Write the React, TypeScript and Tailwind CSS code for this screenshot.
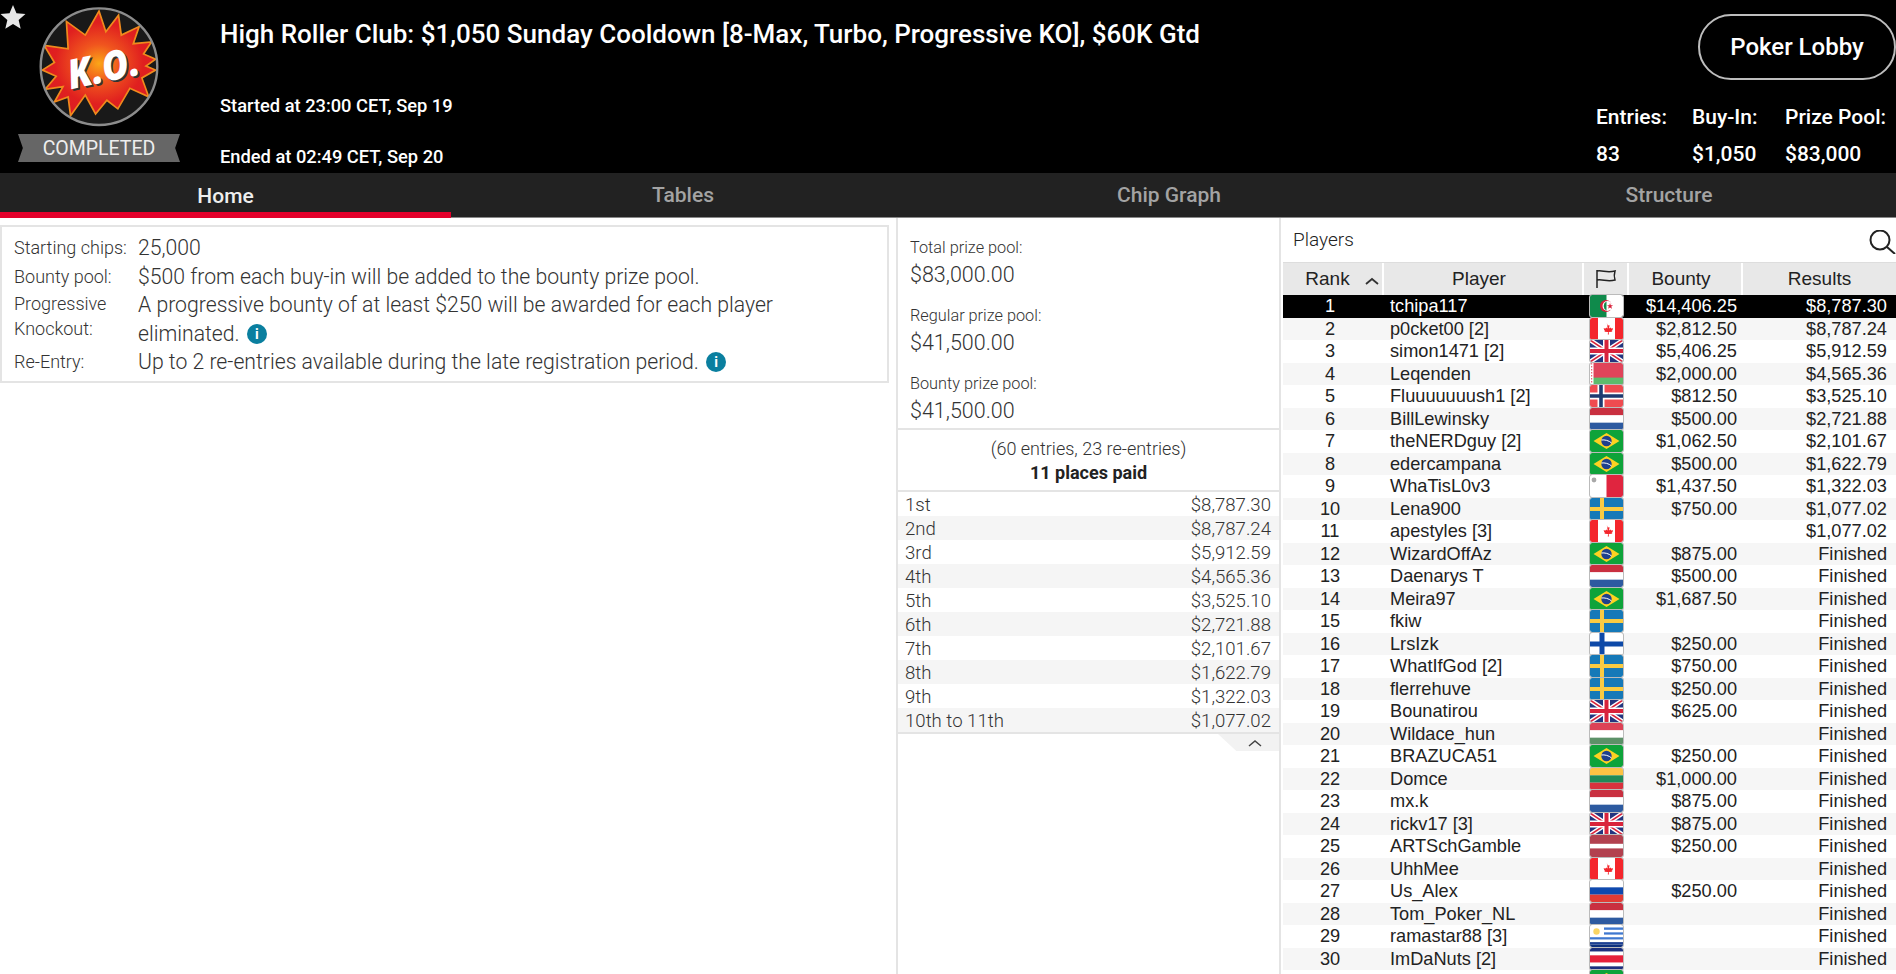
import { Fragment } from "react";

interface Player {
  rank: number;
  name: string;
  flag: string;
  bounty?: string;
  result: string;
}

const players: Player[] = [
  { rank: 1, name: "tchipa117", flag: "dz", bounty: "$14,406.25", result: "$8,787.30" },
  { rank: 2, name: "p0cket00 [2]", flag: "ca", bounty: "$2,812.50", result: "$8,787.24" },
  { rank: 3, name: "simon1471 [2]", flag: "gb", bounty: "$5,406.25", result: "$5,912.59" },
  { rank: 4, name: "Leqenden", flag: "by", bounty: "$2,000.00", result: "$4,565.36" },
  { rank: 5, name: "Fluuuuuuush1 [2]", flag: "no", bounty: "$812.50", result: "$3,525.10" },
  { rank: 6, name: "BillLewinsky", flag: "nl", bounty: "$500.00", result: "$2,721.88" },
  { rank: 7, name: "theNERDguy [2]", flag: "br", bounty: "$1,062.50", result: "$2,101.67" },
  { rank: 8, name: "edercampana", flag: "br", bounty: "$500.00", result: "$1,622.79" },
  { rank: 9, name: "WhaTisL0v3", flag: "mt", bounty: "$1,437.50", result: "$1,322.03" },
  { rank: 10, name: "Lena900", flag: "se", bounty: "$750.00", result: "$1,077.02" },
  { rank: 11, name: "apestyles [3]", flag: "ca", result: "$1,077.02" },
  { rank: 12, name: "WizardOffAz", flag: "br", bounty: "$875.00", result: "Finished" },
  { rank: 13, name: "Daenarys T", flag: "nl", bounty: "$500.00", result: "Finished" },
  { rank: 14, name: "Meira97", flag: "br", bounty: "$1,687.50", result: "Finished" },
  { rank: 15, name: "fkiw", flag: "se", result: "Finished" },
  { rank: 16, name: "LrsIzk", flag: "fi", bounty: "$250.00", result: "Finished" },
  { rank: 17, name: "WhatIfGod [2]", flag: "se", bounty: "$750.00", result: "Finished" },
  { rank: 18, name: "flerrehuve", flag: "se", bounty: "$250.00", result: "Finished" },
  { rank: 19, name: "Bounatirou", flag: "gb", bounty: "$625.00", result: "Finished" },
  { rank: 20, name: "Wildace_hun", flag: "hu", result: "Finished" },
  { rank: 21, name: "BRAZUCA51", flag: "br", bounty: "$250.00", result: "Finished" },
  { rank: 22, name: "Domce", flag: "lt", bounty: "$1,000.00", result: "Finished" },
  { rank: 23, name: "mx.k", flag: "nl", bounty: "$875.00", result: "Finished" },
  { rank: 24, name: "rickv17 [3]", flag: "gb", bounty: "$875.00", result: "Finished" },
  { rank: 25, name: "ARTSchGamble", flag: "lv", bounty: "$250.00", result: "Finished" },
  { rank: 26, name: "UhhMee", flag: "ca", result: "Finished" },
  { rank: 27, name: "Us_Alex", flag: "ru", bounty: "$250.00", result: "Finished" },
  { rank: 28, name: "Tom_Poker_NL", flag: "nl", result: "Finished" },
  { rank: 29, name: "ramastar88 [3]", flag: "uy", result: "Finished" },
  { rank: 30, name: "ImDaNuts [2]", flag: "cr", result: "Finished" },
];

const payouts = [
  ["1st", "$8,787.30"],
  ["2nd", "$8,787.24"],
  ["3rd", "$5,912.59"],
  ["4th", "$4,565.36"],
  ["5th", "$3,525.10"],
  ["6th", "$2,721.88"],
  ["7th", "$2,101.67"],
  ["8th", "$1,622.79"],
  ["9th", "$1,322.03"],
  ["10th to 11th", "$1,077.02"],
];

const pools = [
  ["Total prize pool:", "$83,000.00"],
  ["Regular prize pool:", "$41,500.00"],
  ["Bounty prize pool:", "$41,500.00"],
];

function Stripes({ colors }: { colors: string[] }) {
  const h = 22 / colors.length;
  return (
    <>
      {colors.map((c, i) => (
        <rect key={i} x="0" y={i * h} width="33" height={h} fill={c} />
      ))}
    </>
  );
}

function FlagArt({ code }: { code: string }) {
  switch (code) {
    case "dz":
      return (
        <>
          <rect width="33" height="22" fill="#fff" />
          <rect width="16.5" height="22" fill="#0f8a4b" />
          <circle cx="16" cy="11" r="6" fill="#d8203a" />
          <circle cx="17.5" cy="11" r="5" fill="#fff" />
          <path d="M16.5 6.5 A5 5 0 0 0 16.5 15.5 L16.5 6.5Z" fill="#0f8a4b" />
          <path d="M20 8l.8 2.2 2.3 0-1.8 1.4.7 2.2-2-1.3-1.9 1.3.7-2.2-1.8-1.4 2.3 0z" fill="#d8203a" />
        </>
      );
    case "ca":
      return (
        <>
          <rect width="33" height="22" fill="#fff" />
          <rect width="8" height="22" fill="#f4262c" />
          <rect x="25" width="8" height="22" fill="#f4262c" />
          <path d="M16.5 5l1.6 2.8 1.5-.6-.6 3.4 1.6-1.2.5 1.2 2-.3-.7 2-.9.6 1 .8-3.8.3.2 2.6h-1.1l.2-2.6-3.8-.3 1-.8-.9-.6-.7-2 2 .3.5-1.2 1.6 1.2-.6-3.4 1.5.6z" fill="#f4262c" />
        </>
      );
    case "gb":
      return (
        <>
          <rect width="33" height="22" fill="#23357f" />
          <path d="M0 0L33 22M33 0L0 22" stroke="#fff" strokeWidth="4.4" />
          <path d="M0 0L33 22M33 0L0 22" stroke="#d9233b" strokeWidth="1.6" />
          <path d="M16.5 0V22M0 11H33" stroke="#fff" strokeWidth="7" />
          <path d="M16.5 0V22M0 11H33" stroke="#d9233b" strokeWidth="4" />
        </>
      );
    case "by":
      return (
        <>
          <rect width="33" height="22" fill="#e0445a" />
          <rect y="14.6" width="33" height="7.4" fill="#5cbc6c" />
          <rect width="3.5" height="22" fill="#fff" />
          <path d="M1.7 0V22" stroke="#e0445a" strokeWidth="1" strokeDasharray="1.5 1.5" />
        </>
      );
    case "no":
      return (
        <>
          <rect width="33" height="22" fill="#ef4b50" />
          <path d="M11 0V22M0 11H33" stroke="#fff" strokeWidth="7" />
          <path d="M11 0V22M0 11H33" stroke="#1d3a70" strokeWidth="3.6" />
        </>
      );
    case "nl":
      return <Stripes colors={["#c93040", "#ffffff", "#2d5aa0"]} />;
    case "hu":
      return <Stripes colors={["#dc4256", "#ffffff", "#5c9168"]} />;
    case "lt":
      return <Stripes colors={["#fcc244", "#1f8a58", "#d8323e"]} />;
    case "lv":
      return (
        <>
          <rect width="33" height="22" fill="#b2414f" />
          <rect y="8.8" width="33" height="4.6" fill="#fff" />
        </>
      );
    case "ru":
      return <Stripes colors={["#ffffff", "#0f49ae", "#e23b34"]} />;
    case "br":
      return (
        <>
          <rect width="33" height="22" fill="#0ea33a" />
          <path d="M16.5 3L29.5 11 16.5 19 3.5 11z" fill="#fdd221" />
          <circle cx="16.5" cy="11" r="5.2" fill="#20408c" />
          <path d="M11.4 10C14.5 9.5 19 10.5 21.6 13" stroke="#fff" strokeWidth="1" fill="none" />
        </>
      );
    case "mt":
      return (
        <>
          <rect width="33" height="22" fill="#fff" />
          <rect x="16.5" width="16.5" height="22" fill="#e0253f" />
          <circle cx="4" cy="5" r="2.4" fill="#a8a8a8" />
        </>
      );
    case "se":
      return (
        <>
          <rect width="33" height="22" fill="#1679b8" />
          <path d="M12 0V22M0 11H33" stroke="#f9cb42" strokeWidth="4" />
        </>
      );
    case "fi":
      return (
        <>
          <rect width="33" height="22" fill="#fff" />
          <path d="M12 0V22M0 11H33" stroke="#0d49a8" strokeWidth="5" />
        </>
      );
    case "uy":
      return (
        <>
          <Stripes colors={["#ffffff", "#3f78d0", "#ffffff", "#3f78d0", "#ffffff", "#3f78d0", "#ffffff", "#1c3f92", "#0d2f7e"]} />
          <rect width="14" height="12" fill="#fff" />
          <circle cx="6.5" cy="6.5" r="3.2" fill="#fad564" />
        </>
      );
    case "cr":
      return <Stripes colors={["#1c2f7e", "#ffffff", "#e5203a", "#e5203a", "#ffffff", "#1c2f7e"]} />;
    default:
      return <rect width="33" height="22" fill="#eee" />;
  }
}

function Flag({ code }: { code: string }) {
  return (
    <svg width="33" height="22" viewBox="0 0 33 22" preserveAspectRatio="none" className="block rounded-[2px] outline outline-[0.5px] outline-[#bbb]">
      <FlagArt code={code} />
    </svg>
  );
}

function KoLogo() {
  const burst =
    "295,40 315,100 352,52 360,110 412,85 395,135 448,130 425,165 460,180 432,200 460,212 420,235 440,290 385,265 350,325 318,300 285,340 255,285 212,345 205,290 165,305 190,260 138,268 170,230 130,212 165,190 135,140 205,150 200,70 255,110";
  return (
    <svg width="120" height="120" viewBox="120 28 350 350" className="block">
      <defs>
        <radialGradient id="koGlow" cx="50%" cy="50%" r="52%">
          <stop offset="0%" stopColor="#fba618" />
          <stop offset="35%" stopColor="#f0551e" />
          <stop offset="75%" stopColor="#e0201f" />
          <stop offset="100%" stopColor="#dc1c24" />
        </radialGradient>
        <clipPath id="koClip">
          <circle cx="295" cy="202" r="170" />
        </clipPath>
      </defs>
      <circle cx="295" cy="202" r="170" fill="#191919" />
      <polygon points={burst} fill="url(#koGlow)" stroke="#ef8a1d" strokeWidth="5" clipPath="url(#koClip)" />
      <circle cx="295" cy="202" r="170" fill="none" stroke="#8c8c8c" strokeWidth="7" />
      <text x="312" y="252" textAnchor="middle" textLength="212" lengthAdjust="spacingAndGlyphs" transform="rotate(-12 312 207)" fontFamily="'Open Sans', sans-serif" fontWeight="800" fontStyle="italic" fontSize="118" fill="#333">
        K.O.
      </text>
      <text x="308" y="247" textAnchor="middle" textLength="212" lengthAdjust="spacingAndGlyphs" transform="rotate(-12 308 207)" fontFamily="'Open Sans', sans-serif" fontWeight="800" fontStyle="italic" fontSize="118" fill="#fff">
        K.O.
      </text>
    </svg>
  );
}

function InfoDot() {
  return (
    <span className="inline-flex w-[20px] h-[20px] ml-[2px] rounded-full bg-[#0a7f9f] text-white items-center justify-center text-[14px] leading-none font-bold align-[2px]">
      i
    </span>
  );
}

export default function App() {
  return (
    <main className="h-screen w-full overflow-hidden bg-white flex flex-col [font-family:Roboto,sans-serif] text-[#333]">
      {/* Header */}
      <header className="relative h-[173px] shrink-0 bg-black text-white flex">
        <svg viewBox="0 0 24 24" className="absolute left-0 top-[4px] w-[26px] h-[26px]" fill="#e6e6e6">
          <path d="M12 1l3.2 7.6 8.3.7-6.3 5.4 1.900 8.100L12 18.500l-7.100 4.300 1.900-8.100L.5 9.300l8.300-.7z" />
        </svg>
        <div className="w-[220px] shrink-0 flex flex-col items-center pr-[22px] pt-[7px]">
          <KoLogo />
          <div className="mt-[7px] w-[162px] h-[28px] bg-[#666] flex items-center justify-center text-[19.500px] leading-none text-[#eee] pt-[2px] [clip-path:polygon(0_0,100%_0,97%_50%,100%_100%,0_100%,3%_50%)]">
            COMPLETED
          </div>
        </div>
        <div className="flex-1 flex flex-col">
          <h1 className="mt-[17px] text-[26px] leading-[34px] font-medium">
            High Roller Club: $1,050 Sunday Cooldown [8-Max, Turbo, Progressive KO], $60K Gtd
          </h1>
          <p className="mt-[44px] text-[18.300px] leading-[22px] font-medium">Started at 23:00 CET, Sep 19</p>
          <p className="mt-[29px] text-[18.300px] leading-[22px] font-medium">Ended at 02:49 CET, Sep 20</p>
        </div>
        <div className="w-[300px] shrink-0 flex flex-col items-end">
          <button className="mt-[14px] w-[198px] h-[66px] rounded-[33px] border-2 border-[#bdbdbd] text-[24px] font-medium text-white">
            Poker Lobby
          </button>
          <div className="mt-[25px] w-[300px] grid grid-cols-[96px_93px_1fr] text-[21px] leading-[24px] font-medium gap-y-[13px]">
            <span>Entries:</span>
            <span>Buy-In:</span>
            <span>Prize Pool:</span>
            <span>83</span>
            <span>$1,050</span>
            <span>$83,000</span>
          </div>
        </div>
      </header>

      {/* Tabs */}
      <nav className="h-[45px] shrink-0 bg-[#222] border-b border-[#888] flex text-[21px] font-medium text-[#a3a3a3]">
        <div className="w-[451px] h-[45px] flex items-center justify-center pt-[9px] text-[#eee] border-b-[6px] border-[#e4002b]">Home</div>
        <div className="w-[464px] flex items-center justify-center pt-[1px]">Tables</div>
        <div className="w-[508px] flex items-center justify-center pt-[1px]">Chip Graph</div>
        <div className="flex-1 flex items-center justify-center pt-[1px] pl-[19px]">Structure</div>
      </nav>

      <div className="flex-1 min-h-0 flex">
        {/* Details */}
        <section className="w-[896px] shrink-0 pt-[7px] pr-[7px]">
          <div className="h-[158px] border-2 border-[#e4e4e4] pt-[7px] pl-[12px] pr-[40px] grid grid-cols-[124px_1fr] content-start font-light text-[21.200px] leading-[28.500px]">
            <span className="text-[18px]">Starting chips:</span>
            <span>25,000</span>
            <span className="text-[18px]">Bounty pool:</span>
            <span>$500 from each buy-in will be added to the bounty prize pool.</span>
            <span className="text-[18px] leading-[25px]">
              Progressive
              <br />
              Knockout:
            </span>
            <span>
              A progressive bounty of at least $250 will be awarded for each player eliminated. <InfoDot />
            </span>
            <span className="text-[18px]">Re-Entry:</span>
            <span>
              Up to 2 re-entries available during the late registration period. <InfoDot />
            </span>
          </div>
        </section>

        {/* Prize pool */}
        <section className="w-[385px] shrink-0 border-x-2 border-[#e4e4e4] flex flex-col font-light">
          <div className="h-[212px] shrink-0 pl-[12px] pt-[18px] border-b-2 border-[#e4e4e4]">
            {pools.map(([label, value]) => (
              <div key={label} className="h-[68px]">
                <div className="text-[16.300px] leading-[24px]">{label}</div>
                <div className="text-[21.500px] leading-[30px]">{value}</div>
              </div>
            ))}
          </div>
          <div className="h-[62px] shrink-0 border-b-2 border-[#e4e4e4] text-center text-[18px] leading-[24px] pt-[7px]">
            <div>(60 entries, 23 re-entries)</div>
            <div className="font-bold text-[#222]">11 places paid</div>
          </div>
          <div className="text-[18.600px] leading-[26px] border-b-2 border-[#e4e4e4]">
            {payouts.map(([place, amount], i) => (
              <div key={place} className={`h-[24px] flex justify-between pl-[7px] pr-[8px] ${i % 2 === 1 ? "bg-[#f5f5f5]" : "bg-white"}`}>
                <span>{place}</span>
                <span>{amount}</span>
              </div>
            ))}
          </div>
          <div className="self-end w-[61px] h-[17px] bg-[#f2f2f2] flex items-center justify-end pr-[17px] [clip-path:polygon(0_0,100%_0,100%_100%,30%_100%)]">
            <svg width="14" height="8" viewBox="0 0 14 8" fill="none" stroke="#444" strokeWidth="1.500">
              <path d="M1 7l6-5 6 5" />
            </svg>
          </div>
        </section>

        {/* Players */}
        <section className="flex-1 min-w-0 pl-[2px] overflow-hidden [font-family:'Liberation_Sans',Arial,sans-serif] text-[18.200px] text-[#222]">
          <div className="h-[44px] flex items-center justify-between [font-family:Roboto,sans-serif] font-light text-[19px] pl-[10px]">
            <span className="pt-[1px]">Players</span>
            <svg width="28" height="24" viewBox="0 0 28 24" fill="none" stroke="#222" strokeWidth="2" className="mt-[4px]">
              <circle cx="12" cy="10" r="9.500" />
              <path d="M19 17l8 7" />
            </svg>
          </div>
          <div className="h-[33px] bg-[#e8e8e8] border-t border-[#ddd] flex items-center text-[19px]">
            <div className="w-[101px] h-full flex items-center justify-center relative border-r-2 border-white pr-[10px]">
              Rank
              <svg width="14" height="8" viewBox="0 0 14 8" fill="none" stroke="#333" strokeWidth="1.800" className="absolute right-[3px] top-[14px]">
                <path d="M1 7l6-5 6 5" />
              </svg>
            </div>
            <div className="w-[200px] h-full flex items-center justify-center border-r-2 border-white pr-[8px]">Player</div>
            <div className="w-[45px] h-full flex items-center justify-center border-r-2 border-white">
              <svg width="22" height="20" viewBox="0 0 22 20" fill="none" stroke="#222" strokeWidth="1.500">
                <path d="M2 1v18M2 2c6-1 9 2 18 0-1 3-1 6 0 9-8 2-12-1-18 0" />
              </svg>
            </div>
            <div className="w-[114px] h-full flex items-center justify-center border-r-2 border-white pr-[8px]">Bounty</div>
            <div className="flex-1 h-full flex items-center justify-center">Results</div>
          </div>
          {players.map((p) => (
            <Fragment key={p.rank}>
              <div
                className={`h-[22.500px] flex items-center leading-[22px] ${
                  p.rank === 1 ? "bg-black text-white" : p.rank % 2 === 0 ? "bg-[#f6f6f6]" : "bg-white"
                }`}
              >
                <div className="w-[94px] text-center">{p.rank}</div>
                <div className="w-[206px] pl-[13px] whitespace-nowrap">{p.name}</div>
                <div className="w-[45px] pl-[7px]">
                  <Flag code={p.flag} />
                </div>
                <div className="w-[109px] text-right">{p.bounty}</div>
                <div className="flex-1 text-right pr-[9px]">{p.result}</div>
              </div>
            </Fragment>
          ))}
          <div className="h-[22.500px] flex">
            <div className="w-[345px] pl-[307px]">
              <Flag code="br" />
            </div>
          </div>
        </section>
      </div>
    </main>
  );
}
